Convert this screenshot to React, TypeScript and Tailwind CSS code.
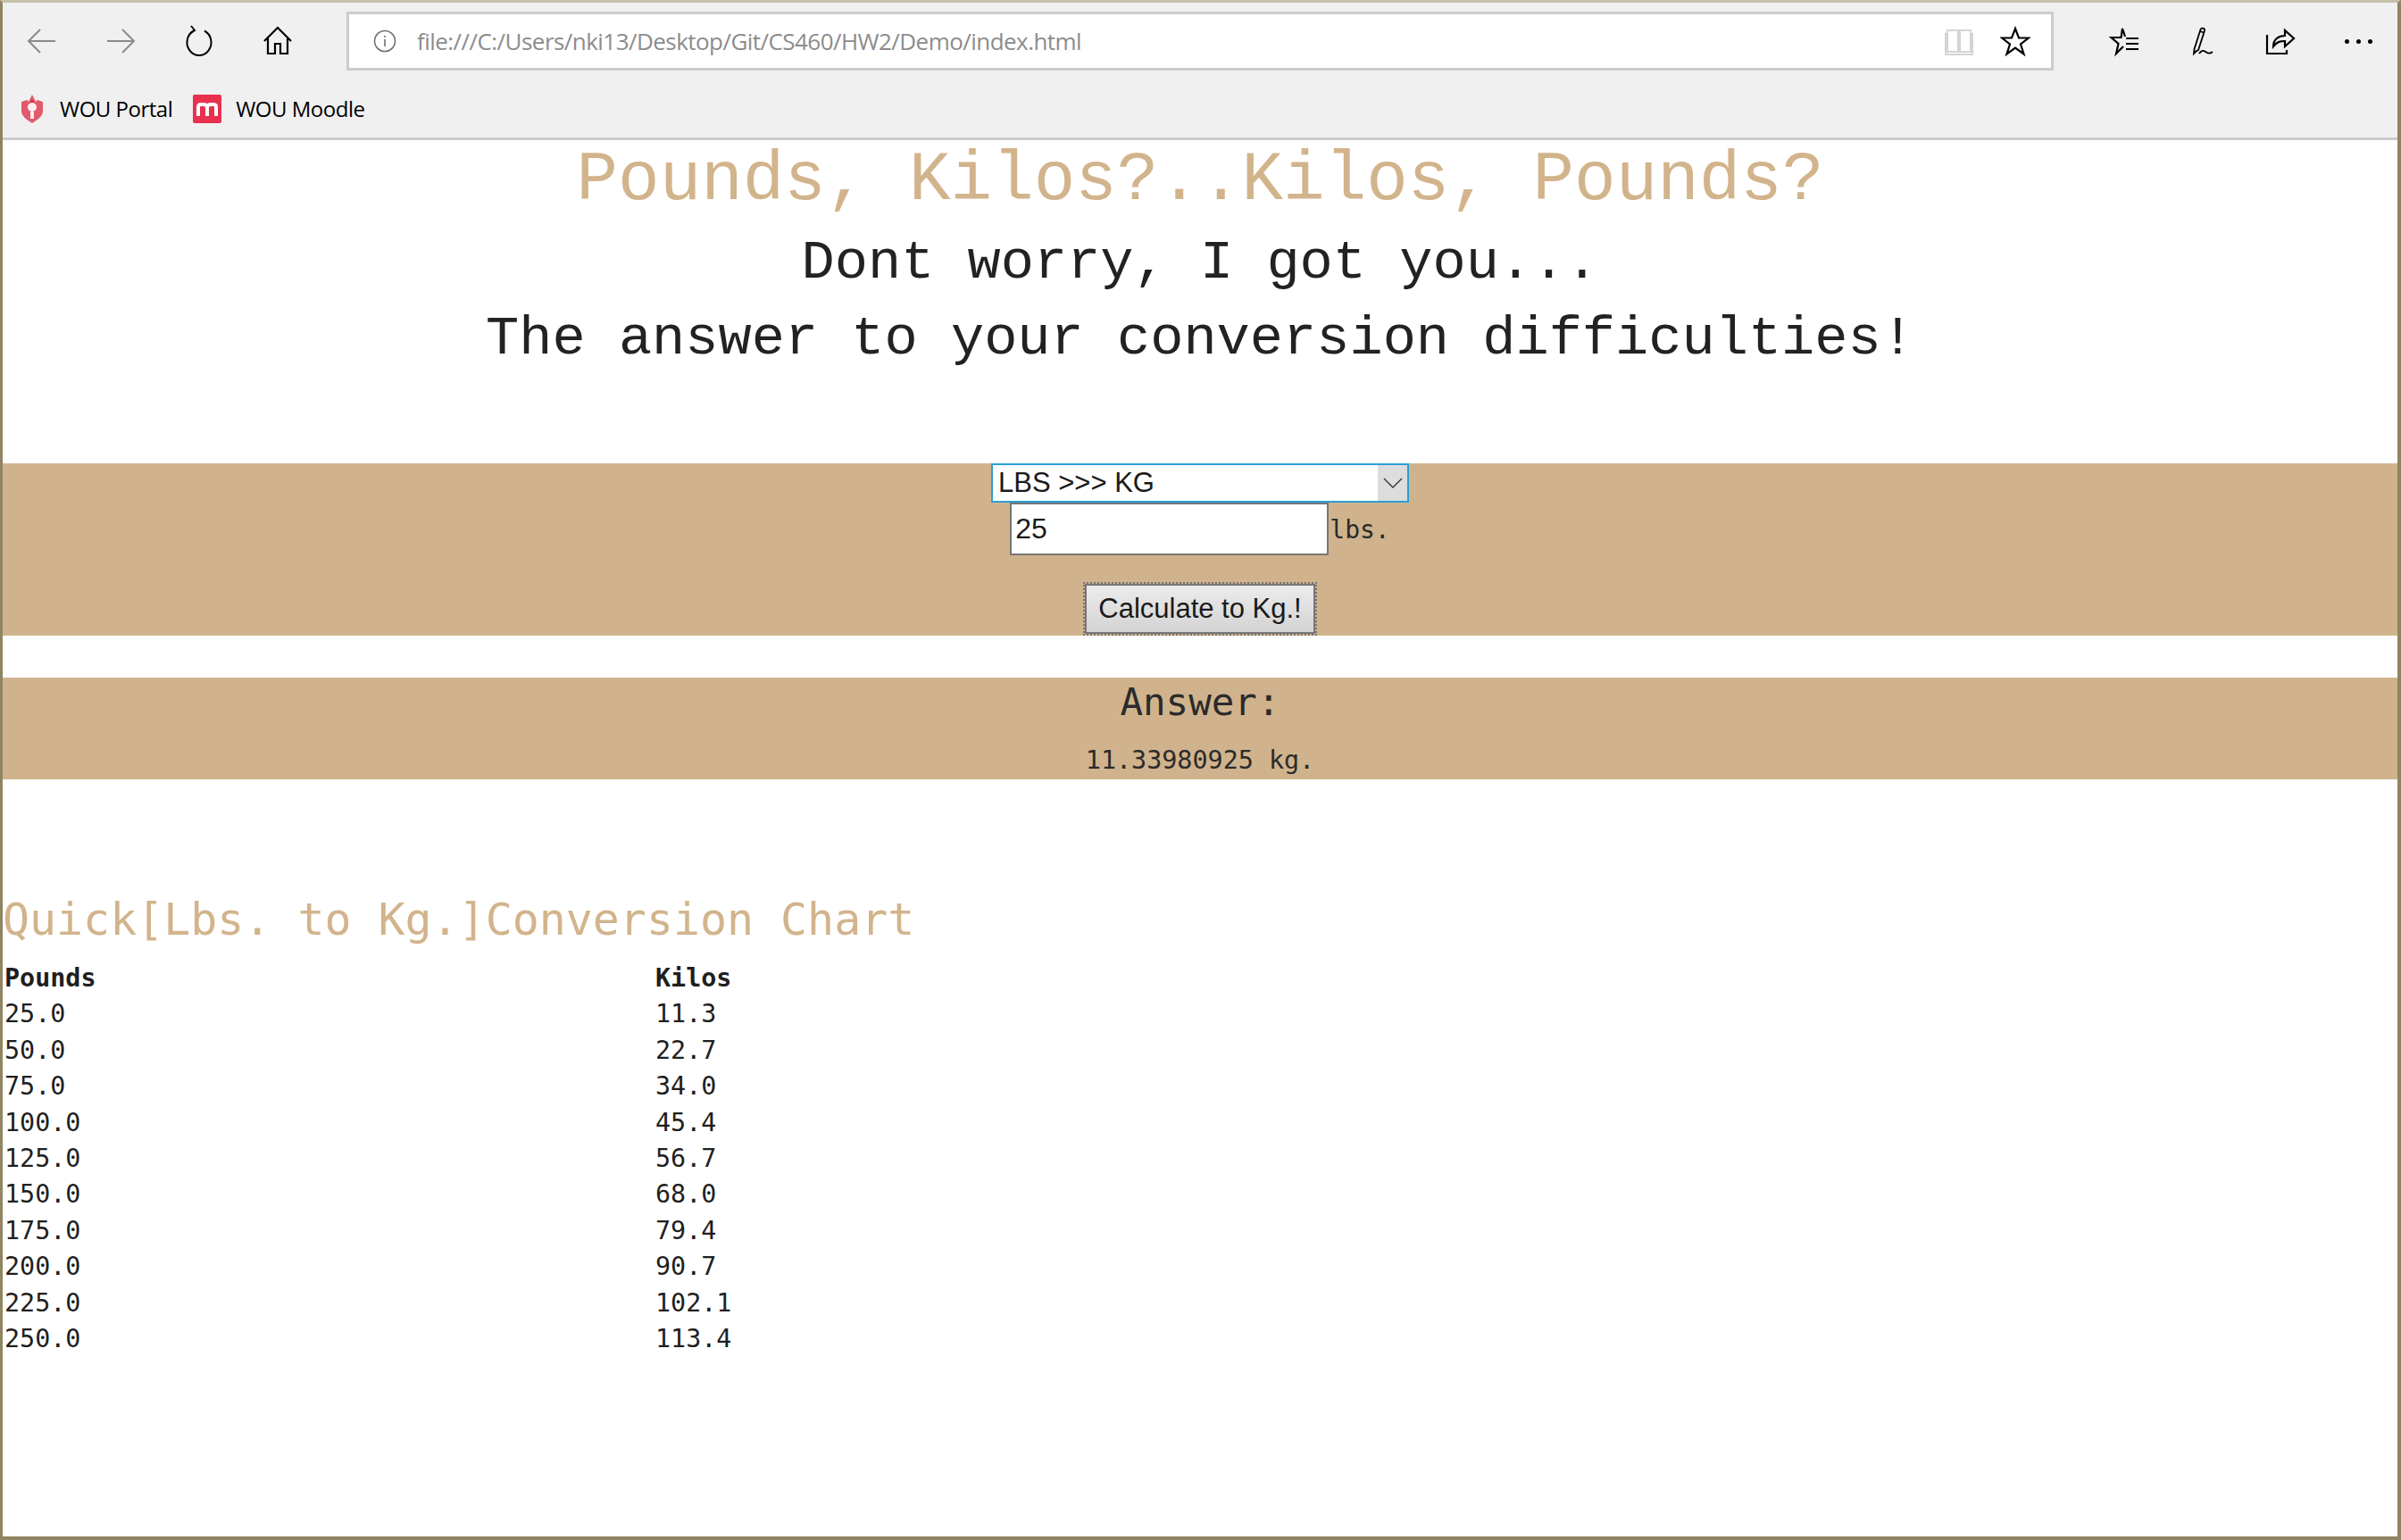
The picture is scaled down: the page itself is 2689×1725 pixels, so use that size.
import React from 'react';

const chart = [
    ['25.0', '11.3'],
    ['50.0', '22.7'],
    ['75.0', '34.0'],
    ['100.0', '45.4'],
    ['125.0', '56.7'],
    ['150.0', '68.0'],
    ['175.0', '79.4'],
    ['200.0', '90.7'],
    ['225.0', '102.1'],
    ['250.0', '113.4']
];

const ToolIcon: React.FC<{ children: React.ReactNode; color?: string; stroke?: number }> = ({ children, color = '#000000', stroke = 2 }) => (
    <div className="w-[88px] h-[66px] flex items-center justify-center">
        <svg width="40" height="40" viewBox="0 0 40 40" fill="none" stroke={color} strokeWidth={stroke}>
            {children}
        </svg>
    </div>
);

const App: React.FC = () => {
    return (
        <div className="w-[2689px] h-[1725px] flex flex-col overflow-hidden bg-white border-l-[3px] border-r-[4px] border-b-[4px] border-t-[3px] border-l-[#8f8560] border-r-[#8f8560] border-b-[#8f8560] border-t-[#c4c0aa] font-['Liberation_Sans',sans-serif]">
            {/* Browser chrome */}
            <div className="h-[154px] shrink-0 bg-[#f0f0f0] border-b-[3px] border-[#cccccc] flex flex-col">
                <div className="flex items-center pt-[10px] h-[76px]">
                    <ToolIcon color="#8a8a8a">
                        <path d="M35 20H5M18 7L5 20l13 13" />
                    </ToolIcon>
                    <ToolIcon color="#8a8a8a">
                        <path d="M5 20h30M22 7l13 13-13 13" />
                    </ToolIcon>
                    <ToolIcon>
                        <path d="M14 8.500A13.500 14.500 0 1 0 26 8.500" />
                        <path d="M11 3l4 5-5 3" />
                    </ToolIcon>
                    <ToolIcon stroke={2.2}>
                        <path d="M5 20L20 5l15 15M9 17v17h8V23h6v11h8V17" />
                    </ToolIcon>
                    <div className="w-[1912px] h-[66px] ml-[33px] bg-white border-[3px] border-[#cccccc] flex items-center">
                        <svg className="ml-[27px]" width="26" height="26" viewBox="0 0 26 26" fill="none" stroke="#6f6f6f" strokeWidth="1.6">
                            <circle cx="13" cy="13" r="11.500" />
                            <path d="M13 11v8M13 7v2" />
                        </svg>
                        <span className="ml-[23px] text-[26px] text-[#8c8c8c] font-['Open_Sans',sans-serif] tracking-[-0.55px]">file:///C:/Users/nki13/Desktop/Git/CS460/HW2/Demo/index.html</span>
                        <div className="ml-auto flex items-center">
                            <svg width="34" height="34" viewBox="0 0 34 34" fill="none" stroke="#d4d4d4" strokeWidth="2">
                                <path d="M4 5h12v24H4zM18 5h12v24H18zM2 8v24h30V8" />
                            </svg>
                            <svg className="ml-[29px] mr-[23px]" width="34" height="34" viewBox="0 0 34 34" fill="none" stroke="#000000" strokeWidth="2.2">
                                <path d="M17 3l4 10.500h11l-9 7 3.500 11-9.500-7-9.500 7 3.500-11-9-7h11z" />
                            </svg>
                        </div>
                    </div>
                    <div className="ml-[33px] flex">
                        <ToolIcon stroke={2.2}>
                            <path d="M21 26l-8 8 2.500-11-8-7h11L20 6l3 9M24 17h14M24 23h14M24 29h14" />
                        </ToolIcon>
                        <ToolIcon stroke={1.8}>
                            <path d="M15 31l-3 3 .5-5 7-22c1-2.500 5-1.500 4.500 1.500L17 30zM19 9l4 1.500M18 34c3-5 6-3 8-1.500s4 2 7-.500" />
                        </ToolIcon>
                        <ToolIcon stroke={2.2}>
                            <path d="M6 13v21h22v-4M13 26c0-8 6-12 13-12V8l10 9-10 9v-6c-6 0-9 1-13 6z" />
                        </ToolIcon>
                        <div className="w-[88px] h-[66px] flex items-center justify-center gap-[8px]">
                            <div className="w-[5px] h-[5px] rounded-full bg-black" />
                            <div className="w-[5px] h-[5px] rounded-full bg-black" />
                            <div className="w-[5px] h-[5px] rounded-full bg-black" />
                        </div>
                    </div>
                </div>
                {/* Favorites bar */}
                <div className="mt-[12px] flex items-center h-[62px] pl-[19px] text-[24px] text-black font-['Open_Sans',sans-serif] tracking-[-0.5px]">
                    <svg width="28" height="32" viewBox="0 0 28 32">
                        <path d="M2 8l6-2 2 2 4-8 4 8 2-2 6 2v11c0 5-6 9-12 13C8 28 2 24 2 19z" fill="#e25a6c" />
                        <path d="M14 5l3 5h-6z" fill="#d92f45" />
                        <circle cx="14" cy="14" r="5" fill="#fbeef0" />
                        <path d="M12 19h4v8h-4z" fill="#fbeef0" />
                    </svg>
                    <span className="ml-[17px]">WOU Portal</span>
                    <div className="ml-[23px] w-[32px] h-[32px] rounded-[2px] bg-[#e8304f] flex items-center justify-center">
                        <svg width="24" height="16" viewBox="0 0 24 16" fill="none" stroke="#ffffff" strokeWidth="4">
                            <path d="M2 16V6c0-2 1-3 3-3h2c3 0 5 1 5 3v10M12 6c0-2 2-3 5-3h2c2 0 3 1 3 3v10" />
                        </svg>
                    </div>
                    <span className="ml-[16px]">WOU Moodle</span>
                </div>
            </div>

            {/* Page */}
            <h1 className="mt-[3px] text-center text-[77.6px] leading-[85px] text-[#d2b48c] font-['Liberation_Mono',monospace]">Pounds, Kilos?..Kilos, Pounds?</h1>
            <h2 className="mt-[10px] text-center text-[62px] leading-[80px] text-[#222222] font-['Liberation_Mono',monospace]">Dont worry, I got you...</h2>
            <h2 className="text-center text-[62px] leading-[89px] text-[#222222] font-['Liberation_Mono',monospace]">The answer to your conversion difficulties!</h2>

            <div className="mt-[95px] h-[193px] shrink-0 bg-[#d0b38c] flex flex-col items-center">
                <div className="relative w-[468px] h-[44px] shrink-0">
                    <select className="w-full h-full appearance-none bg-white border-[2px] border-[#2a9fd6] pl-[6px] text-[31px] leading-[40px] text-[#1a1a1a] outline-none">
                        <option>LBS &gt;&gt;&gt; KG</option>
                    </select>
                    <div className="absolute right-[2px] top-[2px] bottom-[2px] w-[33px] bg-[#dddddd] flex items-center justify-center">
                        <svg width="22" height="14" viewBox="0 0 22 14" fill="none" stroke="#333333" strokeWidth="1.400">
                            <path d="M1 2l10 10L21 2" />
                        </svg>
                    </div>
                </div>
                <div className="flex items-center h-[59px] shrink-0">
                    <input
                        type="text"
                        defaultValue="25"
                        className="w-[357px] h-[59px] bg-white border-[2px] border-[#767676] px-[4px] text-[32px] text-[#1a1a1a] outline-none"
                    />
                    <span className="ml-[1px] mt-[2px] text-[28px] text-[#2b2b2b] font-['DejaVu_Sans_Mono',monospace]">lbs.</span>
                </div>
                <button
                    type="button"
                    className="mt-[32px] w-[258px] h-[56px] shrink-0 border-[2px] border-[#767676] outline-dotted outline-[2px] outline-[#767676] bg-gradient-to-b from-[#ececec] to-[#d3d3d3] text-[31px] leading-[50px] text-[#1a1a1a]"
                >
                    Calculate to Kg.!
                </button>
            </div>

            <div className="mt-[47px] h-[114px] shrink-0 bg-[#d0b38c] text-center text-[#2b2b2b] font-['DejaVu_Sans_Mono',monospace]">
                <div className="text-[42.5px] leading-[55px]">Answer:</div>
                <div className="mt-[18px] text-[28.4px] leading-[40px]">11.33980925 kg.</div>
            </div>

            <h3 className="mt-[127px] text-[49.9px] leading-[60px] text-[#d2b48c] font-['DejaVu_Sans_Mono',monospace]">Quick[Lbs. to Kg.]Conversion Chart</h3>

            <div className="mt-[16px] pl-[2px] grid grid-cols-[729px_auto] auto-rows-[40.4px] text-[28.4px] leading-[40.4px] text-[#1f1f1f] font-['DejaVu_Sans_Mono',monospace]">
                <div className="font-bold">Pounds</div>
                <div className="font-bold">Kilos</div>
                {chart.map(([pounds, kilos]) => (
                    <React.Fragment key={pounds}>
                        <div>{pounds}</div>
                        <div>{kilos}</div>
                    </React.Fragment>
                ))}
            </div>
        </div>
    );
};

export default App;
